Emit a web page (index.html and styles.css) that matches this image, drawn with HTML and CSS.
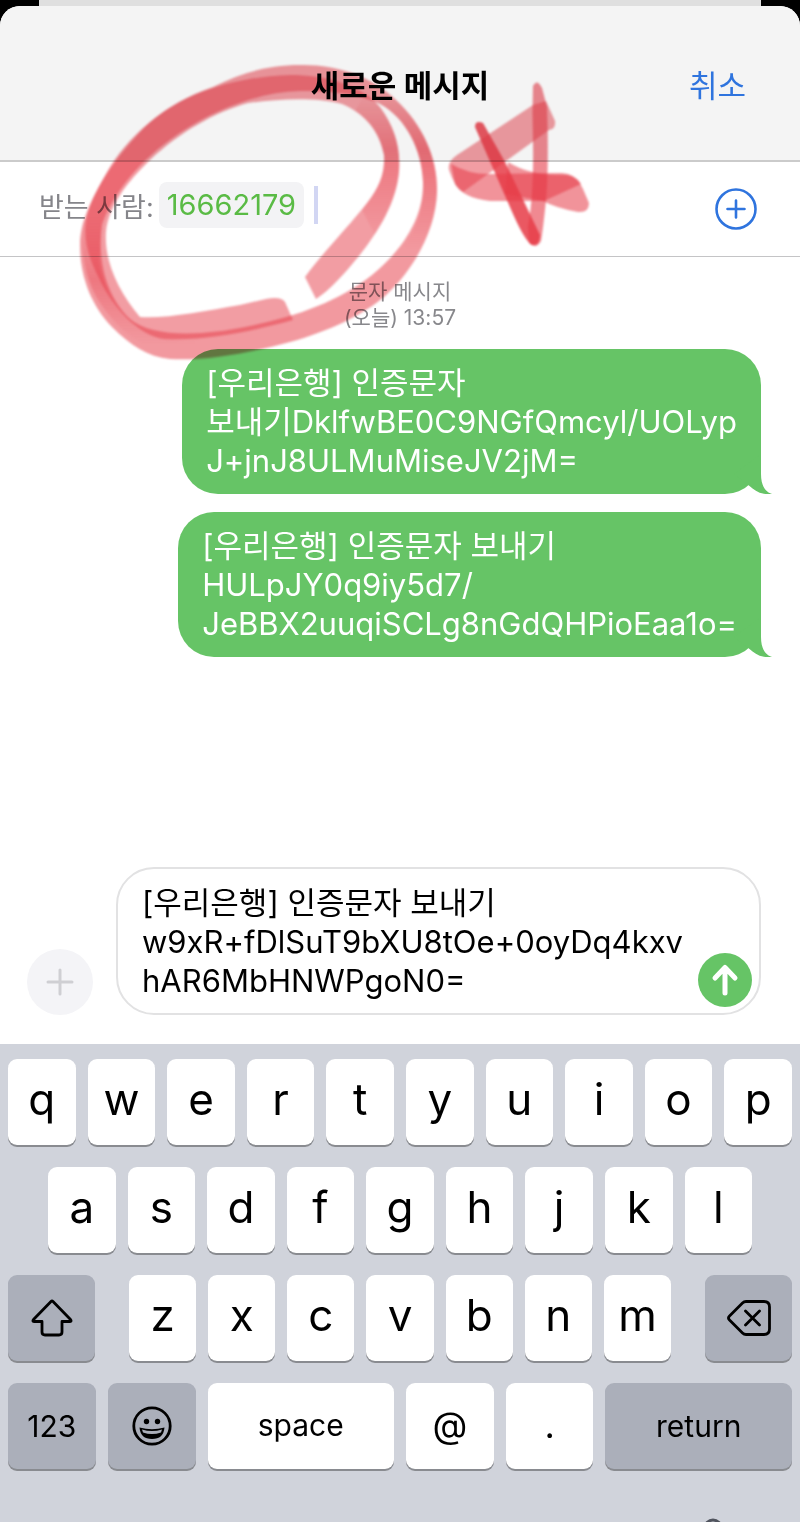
FILE: index.html
```html
<!DOCTYPE html>
<html lang="ko">
<head>
  <meta charset="UTF-8" />
  <meta name="viewport" content="width=device-width, initial-scale=1.0" />
  <title>새로운 메시지</title>
  <link rel="stylesheet" href="styles.css">
</head>
<body>

  <div class="backdrop"></div>

  <div class="sheet">
    <header class="header">
      <h1>새로운 메시지</h1>
      <button type="button" class="cancel">취소</button>
    </header>

    <div class="recipient">
      <div class="to">
        <span class="to-label">받는 사람:</span>
        <span class="chip">16662179</span>
        <span class="caret"></span>
      </div>
      <button type="button" class="add-contact" aria-label="연락처 추가">
        <svg width="42" height="42" viewBox="0 0 42 42" fill="none" stroke="#2f74de" stroke-width="2.6" stroke-linecap="round">
          <circle cx="21" cy="21" r="19.5" />
          <path d="M12.5 21h17M21 12.5v17" />
        </svg>
      </button>
    </div>

    <main class="thread">
      <p class="stamp">문자 메시지<br>(오늘) 13:57</p>

      <div class="bubble">[우리은행] 인증문자<br>보내기DklfwBE0C9NGfQmcyl/UOLyp<br>J+jnJ8ULMuMiseJV2jM=
        <svg class="tail" width="48" height="40" viewBox="0 0 48 40"><path d="M37 0V20C37 31 41 38 48 40C37 41 31 37 25.500 32L10 20Z" fill="#66c466" /></svg>
      </div>

      <div class="bubble">[우리은행] 인증문자 보내기<br>HULpJY0q9iy5d7/<br>JeBBX2uuqiSCLg8nGdQHPioEaa1o=
        <svg class="tail" width="48" height="40" viewBox="0 0 48 40"><path d="M37 0V20C37 31 41 38 48 40C37 41 31 37 25.500 32L10 20Z" fill="#66c466" /></svg>
      </div>
    </main>

    <form class="composer">
      <button type="button" class="attach" aria-label="첨부">
        <svg width="28" height="28" viewBox="0 0 28 28" fill="none" stroke="#cfcfd3" stroke-width="3" stroke-linecap="round"><path d="M2 14h24M14 2v24" /></svg>
      </button>
      <div class="field">
        <textarea rows="3" aria-label="문자 메시지" spellcheck="false">[우리은행] 인증문자 보내기
w9xR+fDlSuT9bXU8tOe+0oyDq4kxv
hAR6MbHNWPgoN0=</textarea>
        <button type="button" class="send" aria-label="보내기">
          <svg width="54" height="54" viewBox="0 0 54 54" fill="none" stroke="#fff" stroke-width="5" stroke-linecap="round" stroke-linejoin="round"><path d="M27 40V15M17 25L27 14.500L37 25" /></svg>
        </button>
      </div>
    </form>

    <div class="keyboard">
      <div class="row">
        <button type="button" class="key">q</button>
        <button type="button" class="key">w</button>
        <button type="button" class="key">e</button>
        <button type="button" class="key">r</button>
        <button type="button" class="key">t</button>
        <button type="button" class="key">y</button>
        <button type="button" class="key">u</button>
        <button type="button" class="key">i</button>
        <button type="button" class="key">o</button>
        <button type="button" class="key">p</button>
      </div>
      <div class="row row-middle">
        <button type="button" class="key">a</button>
        <button type="button" class="key">s</button>
        <button type="button" class="key">d</button>
        <button type="button" class="key">f</button>
        <button type="button" class="key">g</button>
        <button type="button" class="key">h</button>
        <button type="button" class="key">j</button>
        <button type="button" class="key">k</button>
        <button type="button" class="key">l</button>
      </div>
      <div class="row row-shift">
        <button type="button" class="key key-dark key-side" aria-label="shift">
          <svg width="42" height="38" viewBox="0 0 42 38" fill="none" stroke="#000" stroke-width="2.8" stroke-linejoin="round"><path d="M20 2.500Q21 1.500 22 2.500L39.500 20.500Q41 22.500 38.500 22.500H31V33Q31 36 28 36H14Q11 36 11 33V22.500H3.500Q1 22.500 2.500 20.500Z" /></svg>
        </button>
        <div class="row letters">
          <button type="button" class="key">z</button>
          <button type="button" class="key">x</button>
          <button type="button" class="key">c</button>
          <button type="button" class="key">v</button>
          <button type="button" class="key">b</button>
          <button type="button" class="key">n</button>
          <button type="button" class="key">m</button>
        </div>
        <button type="button" class="key key-dark key-side" aria-label="delete">
          <svg width="44" height="36" viewBox="0 0 44 36" fill="none" stroke="#000" stroke-width="2.8" stroke-linecap="round" stroke-linejoin="round"><path d="M19 1.500H37Q42.500 1.500 42.500 7V29Q42.500 34.500 37 34.500H19Q17 34.500 15.500 33L2.500 20Q0.500 18 2.500 16L15.500 3Q17 1.500 19 1.500ZM18.500 11L32.500 25M32.500 11L18.500 25" /></svg>
        </button>
      </div>
      <div class="row">
        <button type="button" class="key key-text key-dark">123</button>
        <button type="button" class="key key-dark" aria-label="emoji">
          <svg width="40" height="40" viewBox="0 0 40 40">
            <circle cx="20" cy="20" r="18.200" fill="none" stroke="#000" stroke-width="2.8" />
            <circle cx="14.500" cy="15.500" r="2.700" />
            <circle cx="25.500" cy="15.500" r="2.700" />
            <path d="M7.500 21.500Q20 25 32.500 21.500Q31.500 33 20 33Q8.500 33 7.500 21.500Z" />
            <path d="M10 23.500Q20 26.500 30 23.500L29 26.500Q20 29.500 11 26.500Z" fill="#abafba" />
          </svg>
        </button>
        <button type="button" class="key key-text key-wide">space</button>
        <button type="button" class="key key-symbol">@</button>
        <button type="button" class="key key-symbol">.</button>
        <button type="button" class="key key-text key-wide key-dark">return</button>
      </div>
      <div class="bottom-bar">
        <svg width="44" height="44" viewBox="0 0 44 44" fill="none" stroke="#9a9da6" stroke-width="2"><circle cx="22" cy="26" r="20" /></svg>
        <svg width="44" height="44" viewBox="0 0 44 44" fill="none" stroke="#50545e" stroke-width="3"><rect x="14" y="3" width="16" height="28" rx="8" /></svg>
      </div>
    </div>
  </div>

  <!-- red marker drawn over the screen -->
  <svg class="marker" width="620" height="370" viewBox="0 0 620 370" fill="#e63b47" aria-hidden="true">
    <defs>
      <linearGradient id="press" gradientUnits="userSpaceOnUse" x1="0" y1="95" x2="0" y2="250">
        <stop offset="0" stop-color="#e63b47" stop-opacity="0" />
        <stop offset=".35" stop-color="#e63b47" />
        <stop offset="1" stop-color="#e63b47" stop-opacity="0" />
      </linearGradient>
      <linearGradient id="turn" gradientUnits="userSpaceOnUse" x1="0" y1="215" x2="0" y2="345">
        <stop offset="0" stop-color="#e63b47" stop-opacity="0" />
        <stop offset=".5" stop-color="#e63b47" />
        <stop offset="1" stop-color="#e63b47" stop-opacity="0" />
      </linearGradient>
    </defs>
    <path opacity=".52" fill-rule="evenodd" d="M300 65C335 64 372 76 396 100C424 126 438 160 437 192C436 228 416 268 384 297C362 315 330 331 290 342C250 353 205 361 170 359C148 357 130 345 112 327C90 304 80 275 80 245C80 222 92 198 107 172C127 137 165 103 213 87C240 73 268 65 300 65ZM300 91C262 92 218 107 178 134C138 161 112 195 102 225C98 255 103 292 129 318C152 339 205 335 245 327C295 317 338 302 372 275C405 248 424 215 423 182C422 150 406 118 380 104C356 93 330 91 300 91Z" />
    <path opacity=".5" d="M305 277C325 250 350 225 367 203C380 187 385 173 384 155C379 130 364 113 342 104C315 97 280 99 248 103C215 112 180 132 150 160C127 182 108 207 106 232C104 262 119 292 140 317C165 319 205 311 240 305L266 299Q281 296 285 302L293 320C245 333 205 341 165 339C138 336 112 306 100 280C88 258 82 236 87 216C95 186 118 155 145 127C177 96 230 77 290 75C325 75 360 84 380 107C394 126 401 147 399 172C396 202 379 231 359 256C345 273 330 290 316 299Z" />
    <path opacity=".45" fill="url(#press)" d="M380 94L396 100C424 126 438 160 437 192C436 215 428 237 415 260L404 246C418 226 424 205 423 182C422 150 406 118 380 104Z" />
    <path opacity=".4" fill="url(#press)" d="M365 93L380 107C394 126 401 147 399 172C397 195 388 215 375 235L362 210C380 187 385 173 384 155C381 136 371 121 355 111Z" />
    <path opacity=".35" fill="url(#turn)" d="M83 215Q78 270 100 303Q120 333 145 345Q170 348 205 342Q160 344 130 320Q104 296 99 260L102 215Z" />
    <path opacity=".5" d="M533 105L546 101L555 121Q556 129 549 130L463 192Q455 188 449 170Q447 162 457 155Z" />
    <path opacity=".55" d="M451 164Q470 175 492 174L562 173Q575 174 581 184L544 201L490 201Q463 198 455 184Z" />
    <path opacity=".55" d="M508 162Q530 176 566 175Q578 176 583 189L589 203Q589 213 578 212Q556 208 543 201L505 194Z" />
    <path opacity=".6" d="M533 86Q537 78 542 88L547 107Q549 165 546 200Q543 230 541 241Q536 250 529 243L528 226Q534 194 533 140Q532 112 533 86Z" />
    <path opacity=".85" d="M475 127Q475 120 483 123L505 162L540 235Q540 246 532 245Q525 241 513 214L492 166Z" />
  </svg>

</body>
</html>
```
FILE: styles.css
```css
* {
  box-sizing: border-box;
  margin: 0;
  padding: 0;
}

body {
  position: relative;
  display: flex;
  flex-direction: column;
  min-height: 100vh;
  background: #000;
  color: #000;
  font-family: Inter, 'Noto Sans CJK KR', sans-serif;
}

button,
textarea {
  border: none;
  background: none;
  color: inherit;
  font-family: inherit;
}

button {
  cursor: pointer;
}

svg {
  display: block;
}

.backdrop {
  height: 6px;
  margin: 0 39px;
  background: #dfdfdf;
}

.sheet {
  flex: 1;
  display: flex;
  flex-direction: column;
  background: #fff;
  border-radius: 20px 20px 0 0;
  overflow: hidden;
}

.header {
  display: grid;
  grid-template-columns: 1fr auto 1fr;
  align-items: center;
  height: 156px;
  padding: 0 54px;
  background: #f4f4f4;
  border-bottom: 2px solid #cbcbcb;
}

.header h1 {
  grid-column: 2;
  font-size: 31px;
  font-weight: 700;
}

.cancel {
  justify-self: end;
  color: #2f74de;
  font-size: 31px;
}

.recipient {
  display: flex;
  align-items: center;
  justify-content: space-between;
  height: 95px;
  padding: 0 43px 0 39px;
  border-bottom: 1px solid #c4c4c6;
}

.to {
  display: flex;
  align-items: center;
  padding-bottom: 8px;
  font-size: 27px;
}

.to-label {
  color: #85858a;
}

.chip {
  margin-left: 5px;
  padding: 0 8px;
  background: #f3f3f5;
  border-radius: 8px;
  color: #5abb45;
  font-size: 29px;
  line-height: 46px;
}

.caret {
  width: 4px;
  height: 38px;
  margin-left: 10px;
  background: #d2d6f3;
}

.thread {
  flex: 1;
  display: flex;
  flex-direction: column;
  align-items: flex-end;
  gap: 18px;
  padding: 22px 39px 0;
}

.stamp {
  align-self: center;
  color: #88888c;
  font-size: 21px;
  line-height: 26px;
  text-align: center;
}

.bubble {
  position: relative;
  padding: 14px 24px;
  background: #66c466;
  border-radius: 36px;
  color: #fff;
  font-size: 31px;
  line-height: 39px;
}

.tail {
  position: absolute;
  right: -11px;
  bottom: 0;
}

.composer {
  display: flex;
  align-items: flex-end;
  gap: 23px;
  padding: 0 39px 29px 27px;
}

.attach {
  display: flex;
  align-items: center;
  justify-content: center;
  width: 66px;
  height: 66px;
  background: #f4f4f7;
  border-radius: 50%;
}

.field {
  flex: 1;
  display: flex;
  align-items: flex-end;
  padding: 14px 7px 6px 24px;
  border: 2px solid #e2e2e3;
  border-radius: 38px;
}

.field textarea {
  flex: 1;
  min-width: 0;
  margin-bottom: 7px;
  font-size: 31px;
  line-height: 39px;
  outline: none;
  overflow: hidden;
  resize: none;
  white-space: pre;
}

.send {
  background: #66c466;
  border-radius: 50%;
}

.keyboard {
  display: flex;
  flex-direction: column;
  gap: 22px;
  padding: 15px 8px 0;
  background: #d0d3db;
}

.row {
  display: flex;
  gap: 12px;
}

.row-middle {
  padding: 0 40px;
}

.row-shift {
  gap: 34px;
}

.letters {
  flex: 1;
}

.key {
  flex: 88 1 0;
  display: flex;
  align-items: center;
  justify-content: center;
  min-width: 0;
  height: 86px;
  padding-bottom: 6px;
  background: #fff;
  border-radius: 9px;
  box-shadow: 0 2px 0 #898b90;
  font-size: 44px;
}

.key-text {
  padding-bottom: 2px;
  font-size: 30px;
}

.key-symbol {
  padding-bottom: 2px;
  font-size: 36px;
}

.key-dark {
  padding-bottom: 0;
  background: #abafba;
}

.key-side {
  flex: 0 0 87px;
}

.key-wide {
  flex-grow: 187;
}

.bottom-bar {
  display: flex;
  justify-content: space-between;
  height: 31px;
  padding: 26px 57px 0;
  overflow: hidden;
}

.marker {
  position: absolute;
  top: 0;
  left: 0;
  filter: blur(1px);
  mix-blend-mode: multiply;
  pointer-events: none;
}
```
